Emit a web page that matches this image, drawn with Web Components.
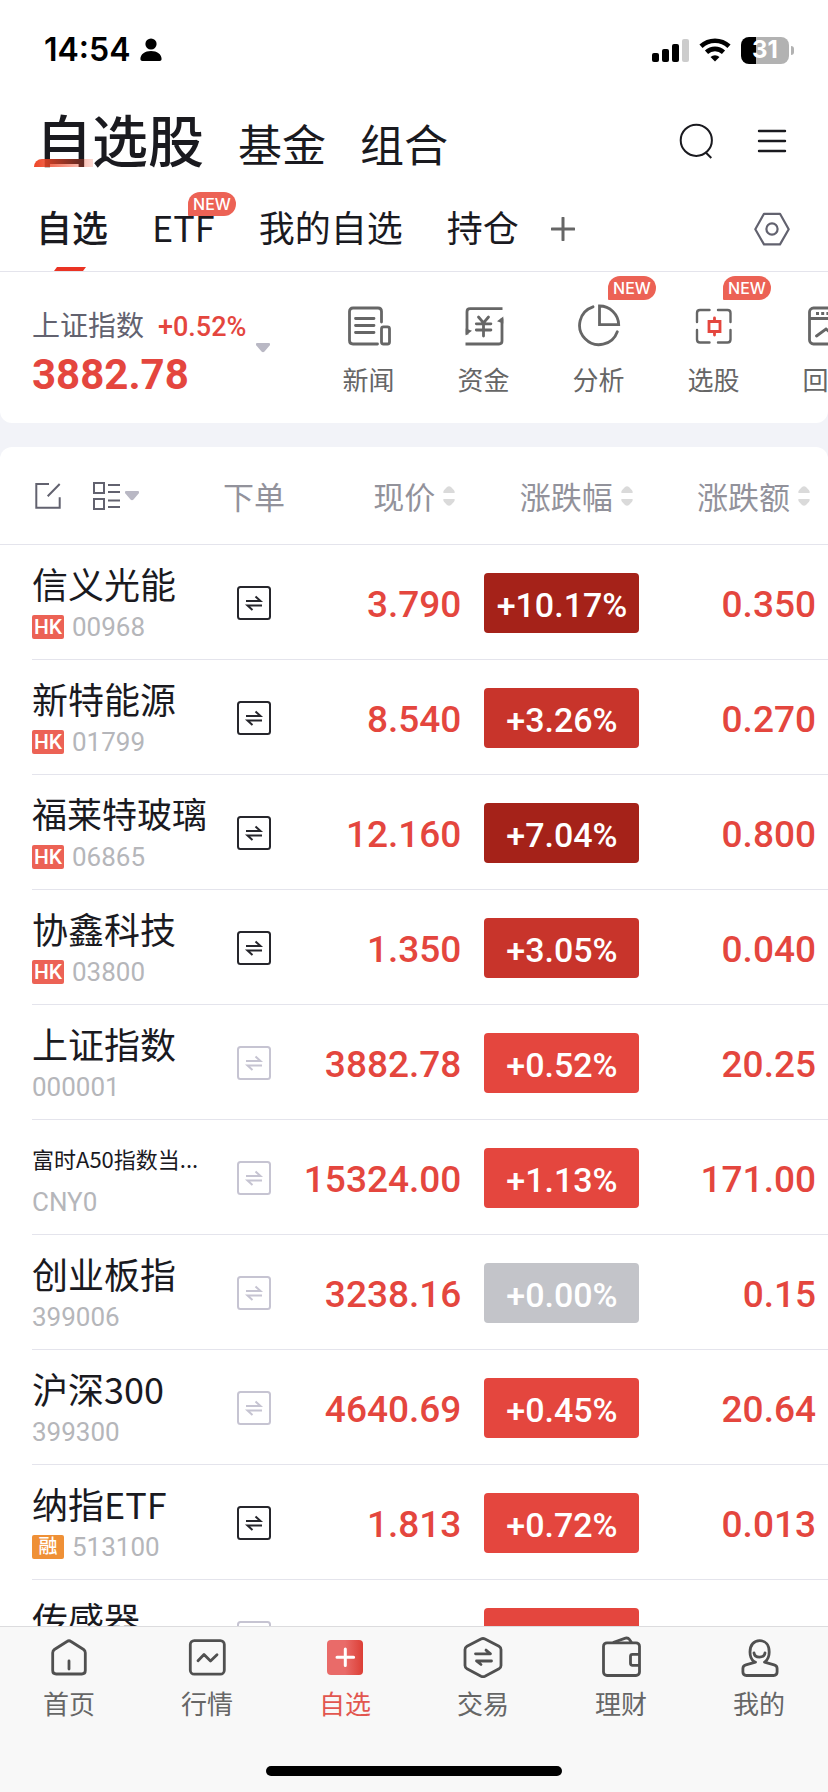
<!DOCTYPE html>
<html lang="zh-CN">
<head>
<meta charset="utf-8">
<meta name="viewport" content="width=device-width, initial-scale=1">
<title>自选股</title>
<style>
  :root {
    --up: #e4463e;
    --ink: #1a1a1f;
    --grey: #666;
    --slate: #62626f;
    --line: #e4e4ec;
    --num: Roboto, "Noto Sans CJK SC", sans-serif;
  }

  body {
    margin: 0;
    color: var(--ink);
    font-family: "Noto Sans CJK SC", sans-serif;
  }
</style>
</head>
<body>

<app-shell>
  <status-bar slot="top" time="14:54" battery="31"></status-bar>

  <main-heading slot="top">
    <heading-link active>自选股</heading-link>
    <heading-link>基金</heading-link>
    <heading-link>组合</heading-link>
  </main-heading>

  <group-tabs slot="top">
    <group-tab active>自选</group-tab>
    <group-tab badge="NEW">ETF</group-tab>
    <group-tab>我的自选</group-tab>
    <group-tab>持仓</group-tab>
  </group-tabs>

  <index-panel name="上证指数" change="+0.52%" value="3882.78">
    <quick-link icon="news">新闻</quick-link>
    <quick-link icon="funds">资金</quick-link>
    <quick-link icon="pie" badge="NEW">分析</quick-link>
    <quick-link icon="pick" badge="NEW">选股</quick-link>
    <quick-link icon="backtest">回测</quick-link>
  </index-panel>

  <watch-list></watch-list>

  <tab-bar slot="bottom">
    <tab-item icon="home">首页</tab-item>
    <tab-item icon="market">行情</tab-item>
    <tab-item icon="watch" active>自选</tab-item>
    <tab-item icon="trade">交易</tab-item>
    <tab-item icon="wallet">理财</tab-item>
    <tab-item icon="me">我的</tab-item>
  </tab-bar>
</app-shell>

<script>
// name: [viewBox width, viewBox height, stroke width, markup]
const ICONS = {
  person: [22, 24, 0, `<g fill="currentColor"><circle cx="11" cy="6" r="5.6"/><path d="M.4 21c0-5 4.6-8 10.600-8s10.600 3 10.600 8c0 1.200-.8 2-2 2h-17.200c-1.200 0-2-.8-2-2z"/></g>`],
  signal: [38, 24, 0, `<g fill="currentColor"><rect x="1" y="15" width="7" height="9" rx="2"/><rect x="11" y="11" width="7" height="13" rx="2"/><rect x="21" y="6" width="7" height="18" rx="2"/><rect x="31" y="1" width="7" height="23" rx="2" opacity=".2"/></g>`],
  wifi: [32, 24, 4.6, `<path d="M2 8.300a20.500 20.500 0 0 1 28 0"/><path d="M7.500 14.200a12.500 12.500 0 0 1 17 0"/><path d="M16 23.600l-4.500-4.600a7 7 0 0 1 9 0z" fill="currentColor" stroke="none"/>`],
  search: [36, 36, 2, `<circle cx="17.300" cy="17.300" r="15.600"/><path d="M27 29.700l5.300 5.300"/>`],
  menu: [36, 36, 2.4, `<path d="M5 8h26M5 18h26M5 28h26" stroke-linecap="round"/>`],
  settings: [36, 36, 2.2, `<path d="M10 2.800h16l8.700 15.400-8.700 15.200h-16l-8.700-15.200z" stroke-linejoin="round"/><circle cx="18" cy="18" r="5.600"/>`],
  plus: [24, 24, 3, `<path d="M12 1v22M1 12h22" stroke-linecap="round"/>`],
  caret: [14, 10, 0, `<path d="M1 0h12q1.500.2.900 2.200l-.9 1-4.500 5.300q-1.500 1.500-3 0l-4.500-5.300-.9-1q-.6-2 .9-2.200z" fill="currentColor"/>`],
  sort: [12, 20, 0, `<path d="M.5 7q-.6-1.600.7-3l2.800-3q2-1.600 4 0l2.800 3q1.300 1.400.7 3zM.5 13h11q.6 1.600-.7 3l-2.800 3q-2 1.600-4 0l-2.800-3q-1.300-1.400-.7-3z" fill="currentColor"/>`],
  edit: [28, 28, 2, `<path d="M15 2h-12.700v23.700h23.400v-10.400M13.700 14.300l12-12.300"/>`],
  layout: [28, 28, 2, `<path d="M2 1h10v10h-10zM2 17h10v10h-10zM16 3h12M16 10h12M16 18.500h12M16 25h12"/>`],
  order: [34, 34, 2, `<rect x="1" y="1" width="32" height="32" rx="2.500"/><path d="M9 15h14.500l-5-4.600M25 19.500h-14.500l5 4.600"/>`],
  news: [44, 44, 2.8, `<path d="M34.500 18v-10.500q0-3.500-3.500-3.500h-25q-3.500 0-3.500 3.500v29q0 3.500 3.500 3.500h24.500" stroke-linecap="round"/><rect x="34.500" y="22.800" width="8" height="17.200" rx="2"/><path d="M8.500 14.500h18.500M8.500 21.500h18.500M8.500 28.500h18.500" stroke-linecap="round"/>`],
  funds: [44, 44, 2.8, `<path d="M40.500 4.700h-32.500q-3 0-3 3v22.800M3.500 40h33.500q3 0 3-3v-22.500"/><path d="M3.700 31.500v-7l6.300 2.300zM41.300 12.500v7l-6.300-2.300z" fill="currentColor" stroke="none"/><path d="M16.500 13l5 5.800 5-5.800M21.500 18.800v13.200M14.300 19.800h14.600M14.300 26h14.600" stroke-linecap="round"/>`],
  pie: [44, 44, 2.8, `<path d="M16 2.800a19.400 19.400 0 1 0 24.300 24.900" stroke-linecap="round"/><path d="M22.500 2v18.700h19.200a19.200 19.200 0 0 0-19.200-18.700z"/>`],
  pick: [44, 44, 2.4, `<path d="M17.500 6h-9.500q-3 0-3 3v9M26 6h9.500q3 0 3 3v9M5 26v9.500q0 3 3 3h9.500M26 38.500h9.500q3 0 3-3v-9.500" stroke-linecap="round"/><path d="M17 17.500h11v10h-11zM22.500 14v3.500M22.500 27.500v3.500" stroke="#e4463e" stroke-width="2.800" stroke-linecap="round"/>`],
  backtest: [44, 44, 2.8, `<rect x="2.500" y="4" width="39" height="36" rx="4"/><path d="M2.500 14.500h39"/><path d="M9 9.500h28" stroke-width="3" stroke-dasharray="3 2.200"/><path d="M9.500 32l9.500-7 6 5 9-8" stroke-linecap="round"/>`],
  home: [44, 44, 2.8, `<path d="M20 6.500q2-1.400 4 0l12.600 8q1.700 1.200 1.700 3.300v17.700q0 3.500-3.500 3.500h-25.600q-3.500 0-3.500-3.500v-17.700q0-2.100 1.700-3.300z"/><path d="M22 26v8" stroke-linecap="round"/>`],
  market: [44, 44, 2.8, `<rect x="5.300" y="5.600" width="34" height="33.600" rx="4"/><path d="M13 25.700l6-6.200 6.500 6.500 6.500-6.300" stroke-linecap="round" stroke-linejoin="round"/>`],
  watch: [44, 44, 3, `<defs><linearGradient id="g"><stop offset=".5" stop-color="#e96b69"/><stop offset="1" stop-color="#dc3f36"/></linearGradient></defs><rect x="4" y="5" width="36" height="35" rx="4" fill="url(#g)" stroke="none"/><path d="M22.300 14v16.400M14 22.200h16.600" stroke="#fff" stroke-linecap="round"/>`],
  trade: [44, 44, 2.8, `<path d="M20 4q2-1 4 0l14 7.300q2 1.200 2 3.300v15.800q0 2.100-2 3.300l-14 7.500q-2 1-4 0l-14-7.500q-2-1.200-2-3.300v-15.800q0-2.100 2-3.300z"/><path d="M14.500 18.800h15l-4.500-3.700M30.500 26h-15l4.500 3.500" stroke-linecap="round" stroke-linejoin="round"/>`],
  wallet: [44, 44, 2.8, `<rect x="4.500" y="7.800" width="36" height="32.700" rx="3.500"/><path d="M14 7.500l12.500-4.300q2.500-.7 4 1.300l2 3M40.500 19.300h-7q-2 0-2 2v7q0 2 2 2h7"/>`],
  me: [44, 44, 2.8, `<path d="M17 26.500c-2.700-2-4-5.600-4-9.500 0-7 3.800-11.300 9.600-11.300s9.600 4.300 9.600 11.300c0 3.900-1.300 7.500-4 9.500M18.500 27.200l-9.600 2.600q-3 .8-3 3.800v3.500q0 3.400 3.500 3.400h27.200q3.500 0 3.500-3.400v-3.500q0-3-3-3.800l-9.600-2.600" stroke-linecap="round"/><path d="M17 18c.8 5.400 10.200 5.400 11 0" stroke-linecap="round"/>`],
};

class AppIcon extends HTMLElement {
  connectedCallback() {
    const [w, h, stroke, markup] = ICONS[this.getAttribute("name")];
    this.attachShadow({ mode: "open" }).innerHTML = `
      <style>
        :host { display: block; flex: none; }
        svg { display: block; }
      </style>
      <svg width="${w}" height="${h}" viewBox="0 0 ${w} ${h}" fill="none" stroke="${stroke ? "currentColor" : "none"}" stroke-width="${stroke}" aria-hidden="true">${markup}</svg>
    `;
  }
}

class AppShell extends HTMLElement {
  connectedCallback() {
    this.attachShadow({ mode: "open" }).innerHTML = `
      <style>
        :host {
          display: flex;
          flex-direction: column;
          height: 100vh;
          overflow: hidden;
          background: #fff;
        }
        main {
          flex: 1;
          min-height: 0;
          overflow-x: hidden;
          overflow-y: auto;
          scrollbar-width: none;
          display: flex;
          flex-direction: column;
          gap: 24px;
          background: #f2f3f8;
        }
      </style>
      <slot name="top"></slot>
      <main><slot></slot></main>
      <slot name="bottom"></slot>
    `;
  }
}

class StatusBar extends HTMLElement {
  connectedCallback() {
    const battery = this.getAttribute("battery");
    this.attachShadow({ mode: "open" }).innerHTML = `
      <style>
        :host {
          display: flex;
          align-items: center;
          justify-content: space-between;
          height: 100px;
          padding: 0 34px 0 44px;
          color: #000;
          font: 600 32px/40px Inter, sans-serif;
        }
        div { display: flex; align-items: center; gap: 10px; }
        .battery {
          display: flex;
          align-items: center;
          justify-content: center;
          width: 48px;
          height: 27px;
          border-radius: 8px;
          background: linear-gradient(90deg, #000 ${battery}%, #b2b2b2 ${battery}%);
          color: #fff;
          font-size: 24px;
          font-weight: 700;
        }
        .cap {
          width: 3px;
          height: 9px;
          margin-left: -8px;
          border-radius: 0 4px 4px 0;
          background: #b2b2b2;
        }
      </style>
      <div><span>${this.getAttribute("time")}</span><app-icon name="person"></app-icon></div>
      <div>
        <app-icon name="signal"></app-icon>
        <app-icon name="wifi"></app-icon>
        <span class="battery">${battery}</span>
        <span class="cap"></span>
      </div>
    `;
  }
}

class MainHeading extends HTMLElement {
  connectedCallback() {
    this.attachShadow({ mode: "open" }).innerHTML = `
      <style>
        :host {
          display: flex;
          align-items: center;
          justify-content: space-between;
          height: 86px;
          padding: 0 38px 0 36px;
        }
        nav { display: flex; align-items: baseline; gap: 34px; margin-bottom: 6px; }
        .tools { display: flex; gap: 39px; margin-bottom: 5px; }
        button { padding: 0; border: 0; background: none; color: inherit; }
      </style>
      <nav><slot></slot></nav>
      <div class="tools">
        <button aria-label="搜索"><app-icon name="search"></app-icon></button>
        <button aria-label="菜单"><app-icon name="menu"></app-icon></button>
      </div>
    `;
  }
}

class HeadingLink extends HTMLElement {
  connectedCallback() {
    this.attachShadow({ mode: "open" }).innerHTML = `
      <style>
        :host { display: block; position: relative; font-size: 44px; line-height: 80px; }
        :host([active]) { font-size: 56px; font-weight: 500; }
        a { color: inherit; text-decoration: none; }
        :host([active])::after {
          content: "";
          position: absolute;
          left: -2px;
          bottom: 11px;
          width: 59px;
          height: 8px;
          border-top-left-radius: 8px;
          background: linear-gradient(90deg, #ee4526, rgba(238, 69, 38, .2));
        }
      </style>
      <a href="#"><slot></slot></a>
    `;
  }
}

class NewBadge extends HTMLElement {
  connectedCallback() {
    this.attachShadow({ mode: "open" }).innerHTML = `
      <style>
        :host {
          display: block;
          width: 48px;
          border-radius: 12px 12px 12px 1px;
          background: #ec6255;
          color: #fff;
          font: 500 16px/24px Inter, sans-serif;
          text-align: center;
        }
      </style>
      <slot></slot>
    `;
  }
}

class GroupTabs extends HTMLElement {
  connectedCallback() {
    this.attachShadow({ mode: "open" }).innerHTML = `
      <style>
        :host {
          display: flex;
          align-items: center;
          justify-content: space-between;
          height: 85px;
          padding: 0 38px 0 36px;
          border-bottom: 1px solid var(--line);
        }
        nav { display: flex; align-items: center; gap: 44px; }
        button { padding: 0; border: 0; background: none; color: var(--slate); }
        .add { margin-left: -12px; color: var(--grey); }
      </style>
      <nav>
        <slot></slot>
        <button class="add" aria-label="添加分组"><app-icon name="plus"></app-icon></button>
      </nav>
      <button aria-label="设置"><app-icon name="settings"></app-icon></button>
    `;
  }
}

class GroupTab extends HTMLElement {
  connectedCallback() {
    const badge = this.getAttribute("badge");
    this.attachShadow({ mode: "open" }).innerHTML = `
      <style>
        :host {
          display: block;
          position: relative;
          padding-bottom: 4px;
          font-size: 36px;
          line-height: 81px;
        }
        :host([active]) { font-weight: 500; }
        a { color: inherit; text-decoration: none; }
        :host([active])::after {
          content: "";
          position: absolute;
          left: 18px;
          bottom: 0;
          width: 32px;
          height: 4px;
          background: #ea3323;
          clip-path: polygon(3px 0, 100% 0, 29px 100%, 0 100%);
        }
        new-badge { position: absolute; top: 6px; left: 36px; }
      </style>
      <a href="#"><slot></slot></a>
      ${badge ? `<new-badge>${badge}</new-badge>` : ""}
    `;
  }
}

class IndexPanel extends HTMLElement {
  connectedCallback() {
    this.attachShadow({ mode: "open" }).innerHTML = `
      <style>
        :host {
          display: flex;
          flex: none;
          height: 151px;
          border-radius: 0 0 12px 12px;
          background: #fff;
          overflow: hidden;
        }
        button {
          display: flex;
          flex: none;
          align-items: center;
          gap: 10px;
          width: 311px;
          padding: 12px 0 0 32px;
          border: 0;
          background: none;
          color: var(--up);
          text-align: left;
        }
        .top { display: flex; align-items: baseline; gap: 14px; }
        .name { color: var(--slate); font: 28px/40px "Noto Sans CJK SC", sans-serif; }
        .change { font: 500 27px/40px var(--num); }
        .value { display: block; font: 700 42px/56px var(--num); }
        app-icon { margin-bottom: 12px; color: #b9b8c4; }
        nav { display: flex; }
      </style>
      <button>
        <span>
          <span class="top">
            <span class="name">${this.getAttribute("name")}</span>
            <span class="change">${this.getAttribute("change")}</span>
          </span>
          <span class="value">${this.getAttribute("value")}</span>
        </span>
        <app-icon name="caret"></app-icon>
      </button>
      <nav><slot></slot></nav>
    `;
  }
}

class QuickLink extends HTMLElement {
  connectedCallback() {
    const badge = this.getAttribute("badge");
    this.attachShadow({ mode: "open" }).innerHTML = `
      <style>
        :host { display: block; position: relative; flex: none; width: 115px; }
        a {
          display: flex;
          flex-direction: column;
          align-items: center;
          gap: 15px;
          padding-top: 32px;
          color: var(--grey);
          font-size: 26px;
          line-height: 32px;
          text-decoration: none;
        }
        new-badge { position: absolute; top: 4px; right: 0; }
      </style>
      <a href="#"><app-icon name="${this.getAttribute("icon")}"></app-icon><span><slot></slot></span></a>
      ${badge ? `<new-badge>${badge}</new-badge>` : ""}
    `;
  }
}

class StockName extends HTMLElement {
  connectedCallback() {
    const tag = this.getAttribute("tag");
    const name = this.getAttribute("name");
    const size = name.length > 5 ? "tiny" : name.length > 4 && !/\w/.test(name) ? "small" : "";
    this.attachShadow({ mode: "open" }).innerHTML = `
      <style>
        :host { display: block; white-space: nowrap; }
        .name { font-size: 36px; line-height: 38px; }
        .small { font-size: 35px; }
        .tiny { font-size: 22px; }
        .info {
          display: flex;
          align-items: center;
          gap: 8px;
          margin-top: 11px;
          color: #b5b6ba;
          font: 26px/28px var(--num);
        }
        .tag {
          width: 32px;
          border-radius: 2px;
          background: #ec6255;
          color: #fff;
          font: 500 21px/24px var(--num);
          text-align: center;
        }
        .tag.margin { background: #ef9036; font-size: 19px; }
      </style>
      <div class="name ${size}">${name}</div>
      <div class="info">
        ${tag ? `<span class="tag ${tag === "融" ? "margin" : ""}">${tag}</span>` : ""}
        <span>${this.getAttribute("code")}</span>
      </div>
    `;
  }
}

class ChangeBadge extends HTMLElement {
  connectedCallback() {
    const v = parseFloat(this.getAttribute("value"));
    const color = v === 0 ? "#c3c4c9" : v >= 5 ? "#a52219" : v >= 3 ? "#c8342b" : "#e4463e";
    this.attachShadow({ mode: "open" }).innerHTML = `
      <style>
        :host {
          display: block;
          width: 155px;
          margin: 0 auto;
          padding-top: 4px;
          border-radius: 4px;
          background: ${color};
          color: #fff;
          font: 500 34px/56px var(--num);
          text-align: center;
        }
      </style>
      ${this.getAttribute("value")}
    `;
  }
}

const STOCKS = [
  { name: "信义光能", tag: "HK", code: "00968", price: "3.790", pct: "+10.17%", diff: "0.350", order: true },
  { name: "新特能源", tag: "HK", code: "01799", price: "8.540", pct: "+3.26%", diff: "0.270", order: true },
  { name: "福莱特玻璃", tag: "HK", code: "06865", price: "12.160", pct: "+7.04%", diff: "0.800", order: true },
  { name: "协鑫科技", tag: "HK", code: "03800", price: "1.350", pct: "+3.05%", diff: "0.040", order: true },
  { name: "上证指数", code: "000001", price: "3882.78", pct: "+0.52%", diff: "20.25" },
  { name: "富时A50指数当...", code: "CNY0", price: "15324.00", pct: "+1.13%", diff: "171.00" },
  { name: "创业板指", code: "399006", price: "3238.16", pct: "+0.00%", diff: "0.15" },
  { name: "沪深300", code: "399300", price: "4640.69", pct: "+0.45%", diff: "20.64" },
  { name: "纳指ETF", tag: "融", code: "513100", price: "1.813", pct: "+0.72%", diff: "0.013", order: true },
  { name: "传感器", code: "885946", price: "7444.44", pct: "+0.74%", diff: "54.67" },
];

class WatchList extends HTMLElement {
  connectedCallback() {
    const rows = STOCKS.map((s) => `
      <tr>
        <td><stock-name name="${s.name}" code="${s.code}" ${s.tag ? `tag="${s.tag}"` : ""}></stock-name></td>
        <td class="order"><button aria-label="下单 ${s.name}" ${s.order ? "" : "disabled"}><app-icon name="order"></app-icon></button></td>
        <td class="num">${s.price}</td>
        <td class="pct"><change-badge value="${s.pct}"></change-badge></td>
        <td class="num">${s.diff}</td>
      </tr>
    `).join("");

    const sortable = ["现价", "涨跌幅", "涨跌额"].map((label) => `
      <th><button class="sort">${label}<app-icon name="sort"></app-icon></button></th>
    `).join("");

    this.attachShadow({ mode: "open" }).innerHTML = `
      <style>
        :host {
          display: block;
          flex: none;
          border-radius: 12px 12px 0 0;
          background: #fff;
        }
        table { width: 100%; border-collapse: collapse; table-layout: fixed; }
        .col-name { width: 212px; }
        .col-order { width: 84px; }
        th, td { box-sizing: border-box; padding: 0; }
        th {
          height: 98px;
          color: #92929b;
          font-size: 31px;
          font-weight: 400;
          line-height: 44px;
          text-align: right;
          white-space: nowrap;
        }
        td { height: 115px; }
        th:first-child, td:first-child { padding-left: 32px; text-align: left; }
        th.order, td.order { text-align: center; }
        tr { background: linear-gradient(var(--line), var(--line)) no-repeat right bottom / 100% 1px; }
        tbody tr { background-size: calc(100% - 32px) 1px; }
        button {
          padding: 0;
          border: 0;
          background: none;
          color: inherit;
          font: inherit;
        }
        .tools { display: flex; align-items: center; gap: 30px; margin-left: 2px; color: var(--slate); }
        .view { display: flex; align-items: center; gap: 5px; }
        .view app-icon + app-icon { color: #b9b8c4; }
        .sort { display: inline-flex; align-items: center; gap: 8px; margin-right: 18px; }
        .sort app-icon { color: #dadada; }
        td.order button { display: inline-block; vertical-align: middle; color: #26262c; }
        td.order button:disabled { color: #c6c4d2; }
        .num {
          padding: 4px 12px 0 0;
          color: var(--up);
          font: 500 37px/44px var(--num);
          text-align: right;
        }
      </style>
      <table>
        <colgroup><col class="col-name"><col class="col-order"><col><col><col></colgroup>
        <thead>
          <tr>
            <th>
              <div class="tools">
                <button aria-label="编辑"><app-icon name="edit"></app-icon></button>
                <button class="view" aria-label="视图"><app-icon name="layout"></app-icon><app-icon name="caret"></app-icon></button>
              </div>
            </th>
            <th class="order">下单</th>
            ${sortable}
          </tr>
        </thead>
        <tbody>${rows}</tbody>
      </table>
    `;
  }
}

class TabBar extends HTMLElement {
  connectedCallback() {
    this.attachShadow({ mode: "open" }).innerHTML = `
      <style>
        :host {
          display: flex;
          flex: none;
          flex-direction: column;
          align-items: center;
          justify-content: space-between;
          height: 166px;
          padding-bottom: 16px;
          box-sizing: border-box;
          border-top: 1px solid #dcdcde;
          background: #f8f8f8;
        }
        nav { display: flex; width: 100%; padding-top: 8px; }
        .handle { width: 296px; height: 10px; border-radius: 5px; background: #000; }
      </style>
      <nav><slot></slot></nav>
      <div class="handle"></div>
    `;
  }
}

class TabItem extends HTMLElement {
  connectedCallback() {
    this.attachShadow({ mode: "open" }).innerHTML = `
      <style>
        :host { display: block; flex: 1; color: var(--grey); }
        :host([active]) { color: #e2564f; }
        a {
          display: flex;
          flex-direction: column;
          align-items: center;
          gap: 8px;
          color: inherit;
          font-size: 26px;
          line-height: 32px;
          text-decoration: none;
        }
        app-icon { color: #505050; }
      </style>
      <a href="#"><app-icon name="${this.getAttribute("icon")}"></app-icon><span><slot></slot></span></a>
    `;
  }
}

customElements.define("app-icon", AppIcon);
customElements.define("new-badge", NewBadge);
customElements.define("app-shell", AppShell);
customElements.define("status-bar", StatusBar);
customElements.define("main-heading", MainHeading);
customElements.define("heading-link", HeadingLink);
customElements.define("group-tabs", GroupTabs);
customElements.define("group-tab", GroupTab);
customElements.define("index-panel", IndexPanel);
customElements.define("quick-link", QuickLink);
customElements.define("stock-name", StockName);
customElements.define("change-badge", ChangeBadge);
customElements.define("watch-list", WatchList);
customElements.define("tab-bar", TabBar);
customElements.define("tab-item", TabItem);
</script>
</body>
</html>
